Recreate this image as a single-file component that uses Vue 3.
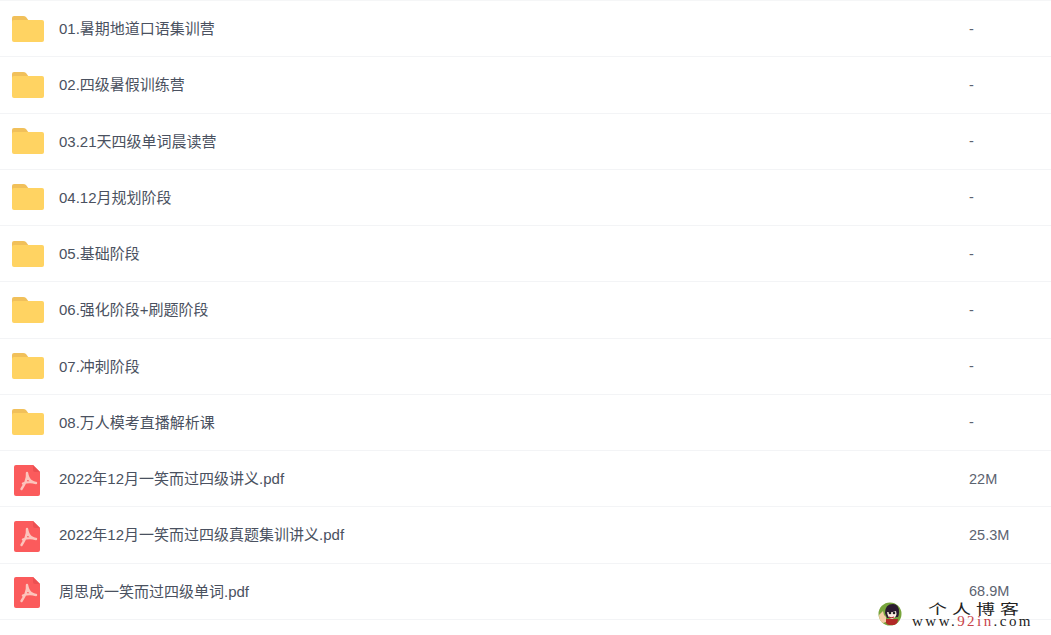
<script setup>
const files = [
  { name: "01.暑期地道口语集训营", size: "-", type: "folder" },
  { name: "02.四级暑假训练营", size: "-", type: "folder" },
  { name: "03.21天四级单词晨读营", size: "-", type: "folder" },
  { name: "04.12月规划阶段", size: "-", type: "folder" },
  { name: "05.基础阶段", size: "-", type: "folder" },
  { name: "06.强化阶段+刷题阶段", size: "-", type: "folder" },
  { name: "07.冲刺阶段", size: "-", type: "folder" },
  { name: "08.万人模考直播解析课", size: "-", type: "folder" },
  { name: "2022年12月一笑而过四级讲义.pdf", size: "22M", type: "pdf" },
  { name: "2022年12月一笑而过四级真题集训讲义.pdf", size: "25.3M", type: "pdf" },
  { name: "周思成一笑而过四级单词.pdf", size: "68.9M", type: "pdf" },
];
</script>

<template>
  <div class="page">
    <div class="list">
      <div v-for="file in files" :key="file.name" class="row">
        <div class="icon">
          <svg v-if="file.type === 'folder'" width="32" height="26" viewBox="0 0 32 26">
            <path d="M0 6V2q0-2 2-2h9q2 0 3 1l3 4v1z" fill="#f1c05a" />
            <rect y="4" width="32" height="22" rx="2" fill="#ffd362" />
          </svg>
          <svg v-else class="pdf" width="26" height="31" viewBox="0 0 26 31">
            <path d="M2 0h17l7 7v22q0 2-2 2H2q-2 0-2-2V2q0-2 2-2z" fill="#fb5b5c" />
            <path d="M19 0l7 7h-5q-2 0-2-2z" fill="#ec5052" />
            <path d="M13 8q.5 5-1.500 9T7.500 24M13 8q1 6 4 8t5 2M9 18.500q6-2.500 13-.5" fill="none" stroke="#fcc4bc" stroke-width="2.400" stroke-linecap="round" />
          </svg>
        </div>
        <span class="name">{{ file.name }}</span>
        <span class="size">{{ file.size }}</span>
      </div>
    </div>

    <div class="watermark">
      <svg class="avatar" width="24" height="24" viewBox="0 0 24 24">
        <circle cx="12" cy="12" r="11.500" fill="#78a53c" />
        <path d="M7 11q0-9 8-9 6 0 6 8 0 3-1 5l-11 1z" fill="#2b1b30" />
        <path d="M9 10q4 1 9-1 1 3 0 5t-4 3q-4 0-5-7z" fill="#fbeee4" />
        <circle cx="12" cy="11" r="1.300" fill="#222" />
        <circle cx="16" cy="11" r="1.300" fill="#222" />
        <path d="M11 15q2 1.500 5 0" fill="none" stroke="#b3262a" stroke-width="1.200" />
        <path d="M7 17h13q0 5-4 6h-5q-4-1-4-6z" fill="#b12a26" />
        <path d="M1 13q2-2 4-4l1 4 2 2v5l-3 1q-4-2-4-8z" fill="#f3cda6" />
      </svg>
      <div class="mark-text">
        <div class="mark-title">个人博客</div>
        <div class="mark-url">www.<span class="red">92in</span>.com</div>
      </div>
    </div>
  </div>
</template>

<style scoped>
.page {
  position: relative;
  width: 1051px;
  height: 635px;
  overflow: hidden;
  background: #fff;
  font-family: "Liberation Sans", "Noto Sans CJK SC", sans-serif;
}

.list {
  border-top: 1px solid #f5f6f7;
}

.row {
  display: flex;
  align-items: center;
  box-sizing: border-box;
  height: 56.25px;
  border-bottom: 1px solid #f3f4f6;
  padding-left: 12px;
}

.icon {
  display: flex;
  align-items: center;
  width: 33px;
  margin-right: 14px;
}

.pdf {
  margin: 3px 0 0 2px;
}

.name {
  flex: 1;
  font-size: 15px;
  color: #4a5160;
  padding-bottom: 2px;
}

.size {
  width: 82px;
  font-size: 14.5px;
  color: #5c6370;
}

.watermark {
  position: absolute;
  right: 18px;
  top: 600px;
  display: flex;
  align-items: flex-start;
  gap: 10px;
}

.avatar {
  margin-top: 2px;
}

.mark-text {
  color: #222;
}

.mark-title {
  font-family: "Noto Sans CJK SC", serif;
  font-size: 19px;
  line-height: 15px;
  height: 15px;
  letter-spacing: 5px;
  padding-left: 16px;
  white-space: nowrap;
  transform: scaleY(0.72);
}

.mark-url {
  font-family: "Liberation Serif", serif;
  font-size: 15px;
  line-height: 12px;
  letter-spacing: 2.450px;
  white-space: nowrap;
}

.red {
  color: #c8444a;
}
</style>
